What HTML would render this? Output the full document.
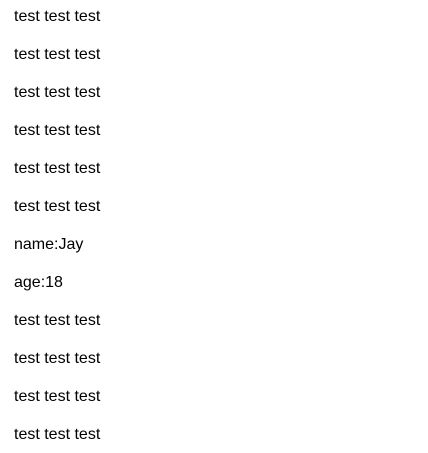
<!DOCTYPE html>
<html><head><style>
body{margin:0;width:428px;height:453px;background:#fff;font-family:"Liberation Sans",sans-serif;font-size:16px;color:#000;position:relative}
div{position:absolute;left:14px;line-height:22px;white-space:nowrap}
</style></head><body>
<div style="top:6px">test test test</div>
<div style="top:44px">test test test</div>
<div style="top:82px">test test test</div>
<div style="top:120px">test test test</div>
<div style="top:158px">test test test</div>
<div style="top:196px">test test test</div>
<div style="top:234px">name:Jay</div>
<div style="top:272px">age:18</div>
<div style="top:310px">test test test</div>
<div style="top:348px">test test test</div>
<div style="top:386px">test test test</div>
<div style="top:424px">test test test</div>
</body></html>
